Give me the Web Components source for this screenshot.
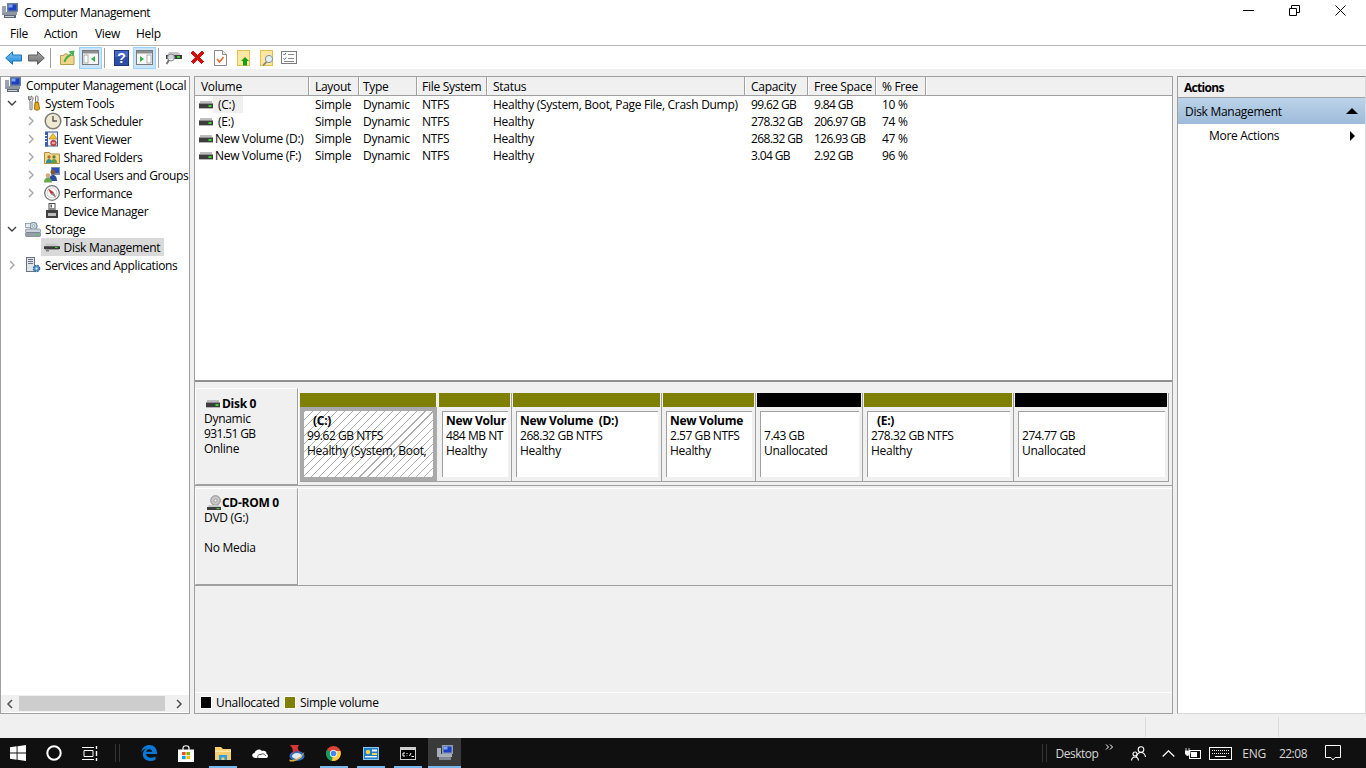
<!DOCTYPE html>
<html lang="en"><head><meta charset="utf-8"><title>Computer Management</title>
<style>
html,body{margin:0;padding:0;height:100%;overflow:hidden}
body{width:1366px;height:768px;display:flex;flex-direction:column;background:#f0f0f0;color:#000;font:12px/15px "Open Sans","Noto Sans",sans-serif;letter-spacing:-.29px}
</style></head><body>
<win-titlebar></win-titlebar>
<win-menubar></win-menubar>
<win-toolbar></win-toolbar>
<win-panes>
  <tree-pane slot="left">
    <tree-row level="0" icon="computer">Computer Management (Local</tree-row>
    <tree-row level="1" icon="tools" chev="open">System Tools</tree-row>
    <tree-row level="2" icon="clock" chev="closed">Task Scheduler</tree-row>
    <tree-row level="2" icon="event" chev="closed">Event Viewer</tree-row>
    <tree-row level="2" icon="share" chev="closed">Shared Folders</tree-row>
    <tree-row level="2" icon="users" chev="closed">Local Users and Groups</tree-row>
    <tree-row level="2" icon="perf" chev="closed">Performance</tree-row>
    <tree-row level="2" icon="device">Device Manager</tree-row>
    <tree-row level="1" icon="storage" chev="open">Storage</tree-row>
    <tree-row level="2" icon="drive16" selected>Disk Management</tree-row>
    <tree-row level="1" icon="services" chev="closed">Services and Applications</tree-row>
  </tree-pane>
  <center-pane slot="center">
    <volume-list slot="top">
      <vol-row name="(C:)" pad hl><span>Simple</span><span>Dynamic</span><span>NTFS</span><span>Healthy (System, Boot, Page File, Crash Dump)</span><span>99.62 GB</span><span>9.84 GB</span><span>10 %</span></vol-row>
      <vol-row name="(E:)" pad><span>Simple</span><span>Dynamic</span><span>NTFS</span><span>Healthy</span><span>278.32 GB</span><span>206.97 GB</span><span>74 %</span></vol-row>
      <vol-row name="New Volume (D:)"><span>Simple</span><span>Dynamic</span><span>NTFS</span><span>Healthy</span><span>268.32 GB</span><span>126.93 GB</span><span>47 %</span></vol-row>
      <vol-row name="New Volume (F:)"><span>Simple</span><span>Dynamic</span><span>NTFS</span><span>Healthy</span><span>3.04 GB</span><span>2.92 GB</span><span>96 %</span></vol-row>
    </volume-list>
    <disk-row slot="bottom" icon="drive" name="Disk 0" l1="Dynamic" l2="931.51 GB" l3="Online">
      <disk-part w="138" selected t="(C:)" indent a="99.62 GB NTFS" b="Healthy (System, Boot,"></disk-part>
      <disk-part w="74" t="New Volur" a="484 MB NT" b="Healthy"></disk-part>
      <disk-part w="150" t="New Volume  (D:)" a="268.32 GB NTFS" b="Healthy"></disk-part>
      <disk-part w="94" t="New Volume" a="2.57 GB NTFS" b="Healthy"></disk-part>
      <disk-part w="107" black a="7.43 GB" b="Unallocated"></disk-part>
      <disk-part w="151" t="(E:)" indent a="278.32 GB NTFS" b="Healthy"></disk-part>
      <disk-part w="155" black a="274.77 GB" b="Unallocated"></disk-part>
    </disk-row>
    <disk-row slot="bottom" cd icon="cd" name="CD-ROM 0" l1="DVD (G:)" l2="&#160;" l3="No Media"></disk-row>
    <disk-legend slot="legend"></disk-legend>
  </center-pane>
  <actions-pane slot="right"></actions-pane>
</win-panes>
<win-status></win-status>
<win-taskbar></win-taskbar>
<script>
const I={
computer:[16,16,'<rect x="5" y="0" width="11" height="9" fill="#6d7f96"/><rect x="6.500" y="1.500" width="8" height="6" fill="#1c3fc4"/><rect x="6.500" y="1.500" width="4" height="3" fill="#7fa4ee"/><rect x="0" y="9" width="15" height="3" fill="#8c97a3"/><rect x="2" y="12" width="12" height="3" fill="#5d6874"/><rect x="0" y="3" width="4" height="7" fill="#9aa3ad"/><rect x="3" y="13" width="9" height="1" fill="#c7cdd3"/>'],
tools:[16,16,'<path d="M4 1v3.500h2V1c2 .6 2.600 2.600 1.600 4.200L7 6v8.200c0 1-2 1-2 0V6l-.7-.8C3.200 3.600 3 1.800 4 1z" fill="#fff" stroke="#6f6f6f"/><rect x="10.500" y="1" width="2.500" height="6" rx="1" fill="#fff" stroke="#777"/><path d="M10 7.500h3.500L14.500 14c0 1.500-5 1.500-5 0z" fill="#e8a91c" stroke="#9c6d08"/>'],
clock:[18,18,'<circle cx="9" cy="9" r="7.800" fill="#efe9d2" stroke="#7d7d7d" stroke-width="1.500"/><path d="M9 4v5h4" fill="none" stroke="#555" stroke-width="1.400"/>'],
event:[16,16,'<rect x="1.500" y="1" width="12" height="14" fill="#eef2fa" stroke="#3b5b9a"/><rect x="1" y="1" width="3" height="14.500" fill="#3c5fa8"/><path d="M9 2.500 13 8H5z" fill="#f4c430" stroke="#a67c00" stroke-width=".6"/><circle cx="9.500" cy="12" r="2.800" fill="#d64545" stroke="#8f2020" stroke-width=".6"/><rect x="7.800" y="11.500" width="3.400" height="1" fill="#fff"/><rect x="1" y="4" width="2" height="1" fill="#fff"/><rect x="1" y="7" width="2" height="1" fill="#fff"/><rect x="1" y="10" width="2" height="1" fill="#fff"/>'],
share:[16,16,'<path d="M.5 3.500h5l1.500 1.500h8.500v9.500H.5z" fill="#f2d88a" stroke="#ad9143"/><circle cx="5" cy="8" r="1.700" fill="#b46d3c"/><path d="M2 14c0-3 1.400-4 3-4s3 1 3 4z" fill="#2d8f9e"/><circle cx="10" cy="8" r="1.700" fill="#6b7e34"/><path d="M7 14c0-3 1.400-4 3-4s3 1 3 4z" fill="#5f9b44"/>'],
users:[16,16,'<rect x="7" y="0" width="9" height="8" fill="#7b8ea8"/><rect x="8" y="1" width="7" height="5" fill="#2d4fc4"/><circle cx="9" cy="5" r="2.500" fill="#7c5a3f"/><path d="M5 14c0-4 1.800-6 4-6s4 2 4 6z" fill="#2d4c9e"/><circle cx="4" cy="8.500" r="2.300" fill="#d8aa7a"/><path d="M0 15.500c0-3.500 1.800-5 4-5s4 1.500 4 5z" fill="#6aa84f"/>'],
perf:[16,16,'<circle cx="8" cy="8" r="7.300" fill="#fff" stroke="#767676" stroke-width="1.300"/><circle cx="8" cy="8" r="5" fill="#fff" stroke="#bbb" stroke-width=".7"/><path d="M4 3.500 9.500 7 12 12.500 6.800 9z" fill="#d82c2c"/><path d="M6.800 9 9.500 7 12 12.500z" fill="#8c8c8c"/>'],
device:[16,16,'<rect x="5" y="0.500" width="6" height="8" fill="#fff" stroke="#4d4d4d"/><rect x="6.500" y="1.500" width="1.400" height="3" fill="#4d4d4d"/><rect x="2" y="7" width="12" height="8" fill="#3f3f3f"/><rect x="4" y="10" width="8" height="3" fill="#bdbdbd"/><rect x="5" y="5" width="6" height="2" fill="#8a8a8a"/>'],
storage:[16,15,'<circle cx="8.500" cy="4" r="3.700" fill="#c9dbe6" stroke="#6f8592"/><circle cx="8.500" cy="4" r="1.300" fill="#eef5f8" stroke="#6f8592" stroke-width=".6"/><rect x="0.500" y="1.500" width="5" height="4" fill="#e6edf0" stroke="#7a8c96" stroke-width=".7"/><rect x="0.500" y="7" width="15" height="3.500" rx="1" fill="#c9d2d8" stroke="#7a8690" stroke-width=".7"/><rect x="0.500" y="10.500" width="15" height="4" rx="1" fill="#93a0a9" stroke="#6e7b84" stroke-width=".7"/><rect x="11" y="12" width="2" height="1.200" fill="#43d63a"/>'],
drive16:[16,13,'<path d="M2 2.500h10l3 2.500H1z" fill="#c9c9c9"/><rect x="0" y="5" width="16" height="3" fill="#3a3a3a"/><rect x="0" y="5" width="16" height="1" fill="#5c5c5c"/><rect x="11" y="6" width="2.500" height="1" fill="#39d32f"/><rect x="2" y="8" width="3" height="2.500" fill="#777"/><rect x="1" y="8" width="14" height="1" fill="#999"/>'],
services:[16,16,'<rect x="1.500" y="0.500" width="8" height="14" fill="#dfe4ea" stroke="#6a7480"/><rect x="3" y="2" width="5" height="1" fill="#6a7480"/><rect x="3" y="4" width="5" height="1" fill="#6a7480"/><rect x="3" y="6" width="5" height="1" fill="#6a7480"/><circle cx="11.500" cy="11.500" r="3" fill="#5e9ad0" stroke="#2e6aa0" stroke-width="1.500" stroke-dasharray="1.600 .8"/><circle cx="11.500" cy="11.500" r="1" fill="#fff"/>'],
drive:[14,8,'<rect x="1" y="0" width="12" height="2" fill="#bdbdbd"/><rect x="0" y="2" width="14" height="1" fill="#8e8e8e"/><rect x="0" y="3" width="14" height="4" fill="#3d3d3d"/><rect x="9.500" y="4" width="3" height="2" fill="#39d32f"/><rect x="0" y="7" width="14" height="1" fill="#b5b5b5"/>'],
cd:[14,16,'<circle cx="8.500" cy="5.500" r="4.800" fill="#c8c8c8" stroke="#8a8a8a"/><circle cx="8.500" cy="5.500" r="1.500" fill="#f4f4f4" stroke="#777" stroke-width=".6"/><path d="M2 10h10l2 2.500H0z" fill="#c9c9c9"/><rect x="0" y="12" width="14" height="3" fill="#3d3d3d"/><rect x="9.500" y="13" width="3" height="1.200" fill="#39d32f"/>'],
back:[17,14,'<defs><linearGradient id="b" x1="0" y1="0" x2="0" y2="1"><stop offset="0" stop-color="#7cc6f5"/><stop offset="1" stop-color="#1b85d8"/></linearGradient></defs><path d="M.7 7 7.500.7v3.300h9v6h-9v3.300z" fill="url(#b)" stroke="#1f74bb"/>'],
fwd:[17,14,'<defs><linearGradient id="f" x1="0" y1="0" x2="0" y2="1"><stop offset="0" stop-color="#a9a9a9"/><stop offset="1" stop-color="#6e6e6e"/></linearGradient></defs><path d="M16.300 7 9.500.7v3.300h-9v6h9v3.300z" fill="url(#f)" stroke="#5e5e5e"/>'],
fup:[15,15,'<path d="M.5 5.500h3l1-1.500h3l1 1.500h5.500v9H.5z" fill="#f3d489" stroke="#b59a52"/><path d="M4.500 12C5.500 8.500 7.500 6 11 4.500" fill="none" stroke="#3fb24a" stroke-width="2"/><path d="M8.500 1.500 14.500 .5 13.500 6.500z" fill="#3fb24a"/>'],
paneL:[17,15,'<rect x=".5" y=".5" width="16" height="14" fill="#f7f7f7" stroke="#7a7a7a"/><rect x="1" y="1" width="15" height="2.500" fill="#8f8f8f"/><rect x="2" y="5" width="4" height="8" fill="#fff" stroke="#8f8f8f" stroke-width=".7"/><path d="M13 6v6l-4-3z" fill="#2fb34a"/>'],
paneR:[17,15,'<rect x=".5" y=".5" width="16" height="14" fill="#f7f7f7" stroke="#7a7a7a"/><rect x="1" y="1" width="15" height="2.500" fill="#8f8f8f"/><rect x="11" y="5" width="4" height="8" fill="#fff" stroke="#8f8f8f" stroke-width=".7"/><path d="M4 6v6l4-3z" fill="#2fb34a"/>'],
help:[15,16,'<rect x=".5" y=".5" width="14" height="15" fill="#2c4ea8" stroke="#1e357c"/><rect x="1" y="1" width="13" height="6" fill="#4668c4"/><text x="7.500" y="13" text-anchor="middle" font-family="Liberation Sans" font-weight="700" font-size="14" fill="#fff">?</text>'],
dmag:[16,15,'<path d="M3 2h9l3 3H1z" fill="#c5c5c5"/><rect x="0" y="5" width="16" height="4" fill="#3d3d3d"/><rect x="11" y="6" width="3" height="2" fill="#39d32f"/><circle cx="5" cy="7.500" r="3.500" fill="#e9f2f8" fill-opacity=".85" stroke="#8a8a8a"/><path d="M3 10 .5 14" stroke="#777" stroke-width="2"/>'],
x:[15,15,'<path d="M2 2l11 11M13 2 2 13" stroke="#d10f0f" stroke-width="3.800" shape-rendering="crispEdges"/>'],
doc:[13,16,'<path d="M.5.500h8l4 4v11H.5z" fill="#fff" stroke="#8a8a8a"/><path d="M8.500.500v4h4" fill="#eee" stroke="#8a8a8a"/><path d="M3 9l2.500 3 4-5" fill="none" stroke="#e8662a" stroke-width="1.500"/>'],
fgreen:[13,16,'<rect x=".5" y=".5" width="12" height="15" fill="#fbe6a2" stroke="#e3c04f"/><path d="M8 7l4 4h-2v4.500H6V11H4z" fill="#14a114"/>'],
fmag:[14,16,'<rect x=".5" y=".5" width="12" height="15" fill="#fbe6a2" stroke="#e3c04f"/><circle cx="9" cy="9" r="3.600" fill="#e6eff5" stroke="#7f8f9a"/><path d="M6.500 11.800 3 15.500" stroke="#8a8a7a" stroke-width="1.800"/>'],
props:[16,13,'<rect x=".5" y=".5" width="15" height="12" fill="#fff" stroke="#7d7d7d"/><path d="M2.500 3l1 1 1.500-2M2.500 7.500l1 1 1.500-2" fill="none" stroke="#2b6cb8"/><path d="M7 3.500h6M7 7.500h6M3 10.500h10" stroke="#8b8b8b"/>'],
win:[16,16,'<path d="M0 2.300 6.600 1.300v6.300H0zM7.500 1.200 16 0v7.600H7.500zM0 8.400h6.600v6.300L0 13.700zM7.500 8.400H16V16l-8.500-1.200z" fill="#fff"/>'],
ring:[16,16,'<circle cx="8" cy="8" r="6.700" fill="none" stroke="#fff" stroke-width="2"/>'],
tv:[16,15,'<path d="M2 4.500h9v6H2zM0 1.500h12M0 13.500h12" fill="none" stroke="#fff"/><path d="M14.500 0v3M14.500 5v5M14.500 12v3" stroke="#fff" stroke-width="1.400"/>'],
edge:[16,16,'<path d="M.2 7C1 2.500 4.500 0 8.500 0 13 0 16 3 16 9H5c.2 3.500 5 5 9.500 2.600v3.200C9 17.500 1.500 15.500 1.800 9 2 6 4 4 6.500 3.300 3.800 3.500 1.700 5 .2 7zM5.200 6.700h6c0-3.200-5.500-3.500-6 0z" fill="#0a78d6"/>'],
store:[16,17,'<path d="M5 5V3c0-3 6-3 6 0v2" fill="none" stroke="#fff" stroke-width="1.200"/><path d="M0 4.500h16V17H0z" fill="#fff"/><rect x="4" y="7" width="3.600" height="3.200" fill="#f25022"/><rect x="8.400" y="7" width="3.600" height="3.200" fill="#7fba00"/><rect x="4" y="11" width="3.600" height="3.200" fill="#00a4ef"/><rect x="8.400" y="11" width="3.600" height="3.200" fill="#ffb900"/>'],
expl:[16,14,'<path d="M0 1h6l2 2h8v11H0z" fill="#f6cf6c"/><path d="M0 4.500h16v1.500H0z" fill="#fbe7a8"/><path d="M4 14V9h8v5h-2.500v-2.500h-3V14z" fill="#2d9fe0"/>'],
cloud:[16,10,'<path d="M4 10C-.5 10-1 5.500 2.500 5 3.500 1.500 8 0 10 3c3-1 5 1 4.500 3 2.500 1 1.500 4-.5 4z" fill="#fff"/><path d="M6 10c-1-2 .5-4 3-3.500 2-1.500 4.500 0 4.500 1.500" fill="none" stroke="#222" stroke-width=".8"/>'],
app:[16,17,'<ellipse cx="8" cy="11" rx="7.500" ry="5" fill="#2a6fc4"/><ellipse cx="8" cy="11" rx="5" ry="3" fill="#dfe8f4"/><path d="M0 14.500C5 16 11 13.500 15.500 6.500 14 12 7 17.500 1 16.500z" fill="#e8b032"/><path d="M1 0h9l-1.500 3L11 8 7 5.500 4 9 3.500 3.500z" fill="#d8353a"/>'],
chrome:[15,15,'<circle cx="7.500" cy="7.500" r="7.500" fill="#db4437"/><path d="M7.500 7.500 1 3.800A7.500 7.500 0 0 0 6 14.900z" fill="#0f9d58"/><path d="M7.500 5h6.800A7.500 7.500 0 0 1 6 14.900z" fill="#ffcd40"/><circle cx="7.500" cy="7.500" r="3.600" fill="#fff"/><circle cx="7.500" cy="7.500" r="2.800" fill="#4285f4"/>'],
cp:[16,13,'<rect x=".5" y=".5" width="15" height="12" fill="#1d7fc7" stroke="#8ac6ee"/><circle cx="5" cy="5" r="2.200" fill="#f7d24e"/><rect x="9" y="2.500" width="5" height="2" fill="#fff"/><rect x="9" y="6" width="5" height="2" fill="#f7d24e"/><rect x="2" y="9" width="12" height="1.400" fill="#fff"/>'],
cmd:[16,13,'<rect x=".5" y=".5" width="15" height="12" fill="#000" stroke="#cfcfcf"/><rect x="1" y="1" width="14" height="2" fill="#cfcfcf"/><path d="M3 6h2M3 9h2M3 6v3M7 6v1M7 8.500v.5M9.500 9l1.500-3M11.500 9.500h2.500" stroke="#fff" fill="none"/>'],
compbig:[16,16,'<rect x="5" y="0" width="11" height="9" fill="#8c9bae"/><rect x="6.500" y="1.500" width="8" height="6" fill="#1c3fc4"/><rect x="6.500" y="1.500" width="4" height="3" fill="#7fa4ee"/><rect x="0" y="9" width="15" height="3" fill="#a7b0ba"/><rect x="2" y="12" width="12" height="3" fill="#7d8892"/><rect x="0" y="3" width="4" height="7" fill="#a5aeb8"/>'],
people:[15,15,'<circle cx="10" cy="3.500" r="2.800" fill="none" stroke="#fff" stroke-width="1.100"/><path d="M5.500 11c.5-3 2-4.500 4.500-4.500s4 1.500 4.500 4.500" fill="none" stroke="#fff" stroke-width="1.100"/><circle cx="4" cy="8" r="2" fill="#101010" stroke="#fff" stroke-width="1.100"/><path d="M.5 14.500C.8 12 2 11 4 11s3.200 1 3.500 3.500" fill="none" stroke="#fff" stroke-width="1.100"/>'],
caret:[13,7,'<path d="M.7 6.500 6.500.8l5.800 5.700" fill="none" stroke="#fff" stroke-width="1.200"/>'],
batt:[16,11,'<path d="M1 0v3M4 0v3M0 3h5v2.500L2.500 8 0 5.500z" fill="#fff" stroke="#fff" stroke-width=".8"/><rect x="4.500" y="2.500" width="11" height="8" fill="none" stroke="#fff"/><rect x="6" y="4" width="6" height="5" fill="#fff"/>'],
kbd:[23,13,'<rect x=".5" y=".5" width="22" height="12" fill="none" stroke="#fff"/><path d="M3 3.500h17M3 6.500h17" stroke="#fff" stroke-dasharray="1 1"/><path d="M6 9.500h11" stroke="#fff"/>'],
note:[16,16,'<path d="M.5.500h15v12H10l-2 2.500-2-2.500H.5z" fill="none" stroke="#fff"/>']
};
function svg(n){const d=I[n];return `<svg width="${d[0]}" height="${d[1]}" viewBox="0 0 ${d[0]} ${d[1]}" style="display:block;flex:none">${d[2]}</svg>`}
function def(name,html){
  customElements.define(name,class extends HTMLElement{
    constructor(){super();this.attachShadow({mode:'open'})}
    connectedCallback(){this.shadowRoot.innerHTML=typeof html==='function'?html(this):html}
  })
}
def('win-titlebar',`<style>:host{display:flex;height:22px;align-items:center;background:#fff;flex:none;padding-left:2px}
.t{margin-left:6px;margin-top:2px;letter-spacing:-.4px}.c{margin-left:auto;display:flex;align-items:center;padding-bottom:2px}
svg{display:block}.b{width:46px;display:flex;justify-content:center}</style>
${svg('computer')}<span class="t">Computer Management</span>
<div class="c"><div class="b"><svg width="11" height="11"><path d="M0 5.500h11" stroke="#000"/></svg></div><div class="b"><svg width="11" height="11"><path d="M.5 3.500h7v7h-7zM2.500 3V.5h8v7H8" fill="none" stroke="#000"/></svg></div><div class="b" style="margin-right:3px"><svg width="11" height="11"><path d="M.5.500l10 10M10.500.500l-10 10" stroke="#000"/></svg></div></div>`);
def('win-menubar',`<style>:host{display:flex;height:23px;align-items:center;background:#fff;flex:none;border-bottom:1px solid #b8b8b8;padding-left:10px}
span{display:block}</style><span style="width:34px">File</span><span style="width:51px">Action</span><span style="width:41px">View</span><span>Help</span>`);
def('tool-btn',h=>`<style>:host{display:flex;flex:none;align-items:center;justify-content:center;box-sizing:border-box;height:22px;width:${h.getAttribute('w')}px;margin-left:${h.getAttribute('m')||0}px}
:host([on]){background:#cce4f7;border:1px solid #99d1ff}</style>${svg(h.getAttribute('i'))}`);
def('win-toolbar',`<style>:host{display:flex;height:23px;align-items:center;background:#fff;flex:none;padding-left:1px}
i{display:block;width:1px;height:20px;background:#a0a0a0;flex:none}</style>
<tool-btn i="back" w="22" m="1"></tool-btn><tool-btn i="fwd" w="22" m="1"></tool-btn><i style="margin-left:3px"></i>
<tool-btn i="fup" w="15" m="9"></tool-btn><tool-btn i="paneL" on w="23" m="4"></tool-btn><i style="margin-left:2px"></i>
<tool-btn i="help" w="15" m="9"></tool-btn><tool-btn i="paneR" on w="23" m="4"></tool-btn><i style="margin-left:2px"></i>
<tool-btn i="dmag" w="16" m="7"></tool-btn><tool-btn i="x" w="15" m="8"></tool-btn><tool-btn i="doc" w="13" m="9"></tool-btn><tool-btn i="fgreen" w="13" m="10"></tool-btn><tool-btn i="fmag" w="14" m="10"></tool-btn><tool-btn i="props" w="16" m="7"></tool-btn>`);
def('win-panes',`<style>:host{display:flex;height:638px;margin-top:7px;gap:4px;flex:none}</style><slot name="left"></slot><slot name="center"></slot><slot name="right"></slot>`);
def('tree-pane',`<style>:host{display:flex;flex-direction:column;width:190px;box-sizing:border-box;flex:none;background:#fff;border:1px solid #a0a0a0;overflow:hidden}
.l{flex:1;margin-top:-1px;overflow:hidden;min-height:0}
.s{height:17px;flex:none;display:flex;align-items:center;background:#f0f0f0;margin:0 0 1px 0}
.th{width:146px;height:15px;background:#cdcdcd;margin-left:1px}.a{width:17px;display:flex;justify-content:center}</style>
<div class="l"><slot></slot></div><div class="s"><div class="a"><svg width="7" height="10"><path d="M6 1 2 5l4 4" fill="none" stroke="#505050" stroke-width="1.500"/></svg></div><div class="th"></div><div class="a" style="margin-left:6px"><svg width="7" height="10"><path d="M1 1l4 4-4 4" fill="none" stroke="#505050" stroke-width="1.500"/></svg></div></div>`);
def('tree-row',h=>{
 const lv=+h.getAttribute('level'),c=h.getAttribute('chev');
 const pad=[4,6,25][lv];
 const chev=lv==0?'':`<div class="c">${c=='open'?'<svg width="10" height="10"><path d="M1 3l4 4 4-4" fill="none" stroke="#404040" stroke-width="1.400"/></svg>':c=='closed'?'<svg width="10" height="10"><path d="M3 1l4 4-4 4" fill="none" stroke="#a6a6a6" stroke-width="1.400"/></svg>':''}</div>`;
 return `<style>:host{display:flex;height:18px;align-items:center;padding-left:${pad}px;white-space:nowrap;letter-spacing:-.36px}
.c{width:${lv==1?18:17.5}px;flex:none}.w{display:flex;align-items:center;height:18px;padding-right:2px}
:host([selected]){letter-spacing:-.29px}
:host([selected]) .w{background:#d9d9d9;margin-left:-3px;padding-left:3px;padding-right:4px}
.i{width:${lv==0?21:20}px;flex:none;display:flex;align-items:center}</style>${chev}<div class="w"><div class="i">${svg(h.getAttribute('icon'))}</div><slot></slot></div>`});
def('center-pane',`<style>:host{display:flex;flex-direction:column;width:979px;box-sizing:border-box;flex:none;border:1px solid #a0a0a0;background:#f0f0f0}
.b{flex:1;min-height:0}</style><slot name="top"></slot><div class="b"><slot name="bottom"></slot></div><slot name="legend"></slot>`);
const COLS='114px 50px 58px 70px 258px 63px 68px 50px';
def('volume-list',`<style>:host{display:block;height:305px;flex:none;background:#fff;border-bottom:2px solid #8f8f8f;box-sizing:border-box}
.h{display:grid;grid-template-columns:${COLS};justify-content:start;height:19px;box-sizing:border-box;background:#f0f0f0;border-bottom:1px solid #a0a0a0;line-height:19px}
.h span{padding-left:6px;border-right:1px solid #a0a0a0;box-shadow:1px 0 0 #fff;white-space:nowrap;overflow:hidden}
.h span:nth-child(3){padding-left:4px}.h span:nth-child(4){padding-left:5px}</style>
<div class="h"><span>Volume</span><span>Layout</span><span>Type</span><span>File System</span><span>Status</span><span>Capacity</span><span>Free Space</span><span>% Free</span></div><slot></slot>`);
def('vol-row',h=>{const p=h.hasAttribute('pad');return `<style>:host{display:grid;grid-template-columns:${COLS};justify-content:start;height:17px;line-height:17px;white-space:nowrap}
.v{display:flex;align-items:center;padding-left:4px;overflow:hidden}.n{margin-left:${p?0:2}px;padding:0 ${p?'5px':'0'}}
.n.hl{background:#f0f0f0;width:20px}
::slotted(span){padding-left:6px;display:block}
::slotted(span:nth-child(2)){padding-left:4px}::slotted(span:nth-child(3)){padding-left:5px}
::slotted(span:nth-child(5)),::slotted(span:nth-child(6)){letter-spacing:-.62px}</style>
<div class="v">${svg('drive')}<span class="n ${h.hasAttribute('hl')?'hl':''}">${h.getAttribute('name')}</span></div><slot></slot>`});
def('disk-row',h=>{const cd=h.hasAttribute('cd');return `<style>:host{display:flex;height:${cd?100:104}px;box-sizing:border-box;border-bottom:1px solid #a0a0a0;padding-top:${cd?2:6}px;background:#f0f0f0}
.l{width:103px;flex:none;box-sizing:border-box;height:97px;padding:7px 0 0 8px;border-left:1px solid #fff;border-top:1px solid #fff;border-right:1px solid #a0a0a0;border-bottom:1px solid #a0a0a0;box-shadow:1px 0 0 #fff}
.n{display:flex;align-items:center;font-weight:700;margin-top:${cd?'-1px':'0'};height:15px;gap:${cd?1:2}px;margin-left:${cd?3:2}px}
.num{letter-spacing:-.62px}
.p{display:flex;align-items:flex-start;padding:5px 0 0 2px;flex:1;min-width:0}
.f{display:flex;flex:none;box-sizing:border-box;height:${cd?0:89}px;border-bottom:1px solid #a0a0a0}
.top{flex:1;border-top:1px solid #fff;margin-left:-2px;margin-top:-5px}</style>
<div class="l"><div class="n">${svg(h.getAttribute('icon'))}<span>${h.getAttribute('name')}</span></div><div>${h.getAttribute('l1')}</div><div class="num">${h.getAttribute('l2')}</div><div>${h.getAttribute('l3')}</div></div>
<div class="p">${cd?'<div class="top"></div>':'<div class="f"><slot></slot></div>'}</div>`});
def('disk-part',h=>{const s=h.hasAttribute('selected'),bl=h.hasAttribute('black');const t=h.getAttribute('t')||'&#160;';
return `<style>:host{display:block;flex:none;width:${h.getAttribute('w')}px;box-sizing:border-box;${s?'':'border-right:1px solid #a0a0a0;'}height:88px}
.bar{height:14px;background:${bl?'#000':'#808000'};margin:${s?'0 2px 0 0':'0 1px'}}
.o{height:74px;box-sizing:border-box;padding:${s?'4px':'4px 3px 4px 4px'};${s?'background:#a9a9a9;margin-right:1px;':''}}
.b{height:100%;box-sizing:border-box;overflow:hidden;white-space:nowrap;background-color:#fff;${s?'padding:2px 0 0 3px;background-image:repeating-linear-gradient(135deg,#b0b0b0 0,#b0b0b0 .8px,#fff .8px,#fff 5.7px);':'border-left:1px solid #a0a0a0;border-top:1px solid #a0a0a0;padding:1px 0 0 3px;'}}
.t{font-weight:700;white-space:pre;${h.hasAttribute('indent')?'padding-left:6px;':''}}.a{letter-spacing:-.45px}</style>
<div class="bar"></div><div class="o"><div class="b"><div class="t">${t}</div><div class="a">${h.getAttribute('a')}</div><div>${h.getAttribute('b')}</div></div></div>`});
def('disk-legend',`<style>:host{display:flex;align-items:center;height:21px;flex:none;box-sizing:border-box;border-top:1px solid #fff;padding:0 0 1px 5px;background:#f0f0f0}
b{display:block;width:10px;height:11px;border:1px solid #fff;margin-right:4px;flex:none}</style>
<b style="background:#000"></b><span style="width:68px">Unallocated</span><b style="background:#808000"></b><span>Simple volume</span>`);
def('actions-pane',`<style>:host{display:block;flex:1;background:#fff;border:1px solid #a0a0a0;border-color:#8f8f8f #d8d8d8 #d8d8d8 #a0a0a0}
.h{height:20px;line-height:21px;background:#f0f0f0;font-weight:700;padding-left:6px;border-bottom:1px solid #a0a0a0;letter-spacing:-.7px}
.d{height:26px;display:flex;align-items:center;justify-content:space-between;padding:0 7px 0 7px;background:linear-gradient(#bcd4ea,#9dbad8)}
.m{height:23px;display:flex;align-items:center;justify-content:space-between;padding:0 10px 0 31px}svg{display:block}</style>
<div class="h">Actions</div><div class="d"><span>Disk Management</span><svg width="12" height="6"><path d="M6 0l6 6H0z" fill="#000"/></svg></div>
<div class="m"><span>More Actions</span><svg width="5" height="10"><path d="M0 0l5 5-5 5z" fill="#000"/></svg></div>`);
def('win-status',`<style>:host{display:flex;height:24px;flex:none;background:#f0f0f0;box-sizing:border-box;padding:3px 0 1px 1145px}
i{display:block;width:1px;background:#dadada}</style><i></i><i style="margin-left:132px"></i>`);
def('win-taskbar',`<style>:host{display:flex;height:30px;flex:none;background:#101010;color:#d6d6d6;align-items:center}
.s{width:36px;height:30px;display:flex;align-items:center;justify-content:center;flex:none}
.a{width:37px;height:30px;display:flex;align-items:center;justify-content:center;flex:none;box-sizing:border-box;position:relative}
.u::after{content:"";position:absolute;left:5px;right:4px;bottom:0;height:2px;background:#76b9ed}
.act{background:#3a3a3a;margin:0 2px;width:33px}.act::after{content:"";position:absolute;inset:auto 0 0 0;height:2px;background:#76b9ed}
.sep{width:5px;height:18px;flex:none;border-left:1px solid #333;border-right:1px solid #333;box-sizing:border-box}
.r{margin-left:auto;display:flex;align-items:center;height:30px}
.r span{white-space:nowrap}</style>
<div class="s">${svg('win')}</div><div class="s">${svg('ring')}</div><div class="s">${svg('tv')}</div>
<div class="sep" style="margin-left:7px"></div><div style="width:10px"></div>
<div class="a">${svg('edge')}</div><div class="a">${svg('store')}</div><div class="a u">${svg('expl')}</div><div class="a">${svg('cloud')}</div><div class="a">${svg('app')}</div><div class="a u">${svg('chrome')}</div><div class="a u">${svg('cp')}</div><div class="a u">${svg('cmd')}</div><div class="a act">${svg('compbig')}</div>
<div class="r"><div class="sep"></div><span style="margin-left:9px;letter-spacing:-.5px">Desktop</span><svg width="9" height="6" style="margin:-12px 0 0 7px"><path d="M1 .5 3.500 3 1 5.500M5 .5 7.500 3 5 5.500" fill="none" stroke="#fff"/></svg>
<div style="margin-left:17px">${svg('people')}</div><div style="margin-left:16px">${svg('caret')}</div><div style="margin-left:10px">${svg('batt')}</div><div style="margin-left:8px">${svg('kbd')}</div><span style="margin-left:10px">ENG</span><span style="margin-left:13px;letter-spacing:-.5px">22:08</span><div style="margin:0 25px 0 18px">${svg('note')}</div></div>`);
</script>
</body></html>
